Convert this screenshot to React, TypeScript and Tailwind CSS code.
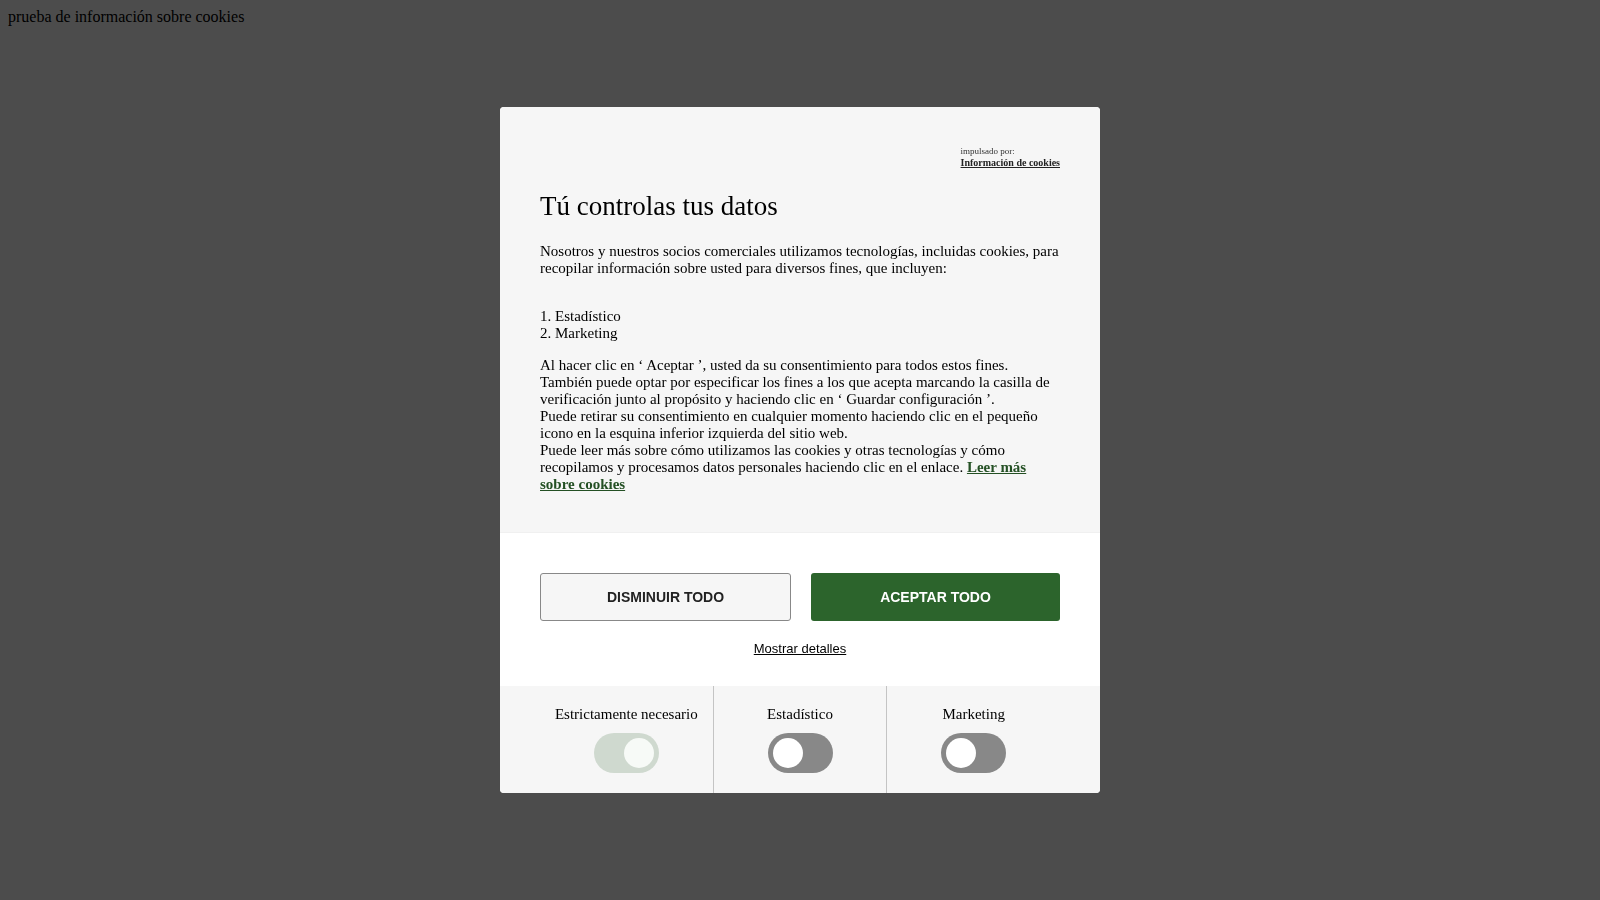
import { useState } from 'react';

interface Category {
  id: string;
  label: string;
  required?: boolean;
}

const categories: Category[] = [
  { id: 'necessary', label: 'Estrictamente necesario', required: true },
  { id: 'statistics', label: 'Estadístico' },
  { id: 'marketing', label: 'Marketing' },
];

interface ToggleProps {
  category: Category;
  checked: boolean;
  onChange: (checked: boolean) => void;
}

function CategoryToggle({ category, checked, onChange }: ToggleProps) {
  return (
    <div className="flex flex-1 flex-col items-center gap-[10px] border-r border-[#c4c4c4] py-5 last:border-r-0">
      <label htmlFor={category.id} className="whitespace-nowrap">
        {category.label}
      </label>
      <input
        id={category.id}
        type="checkbox"
        checked={checked}
        disabled={category.required}
        onChange={(event) => onChange(event.target.checked)}
        className="flex h-10 w-[65px] cursor-pointer appearance-none items-center rounded-full bg-[#888888] p-[5px] before:block before:size-[30px] before:rounded-full before:bg-white checked:justify-end checked:bg-[#2c642c] disabled:cursor-default disabled:bg-[#cfd9cf] disabled:before:bg-[#f7faf7]"
      />
    </div>
  );
}

export default function App() {
  const [accepted, setAccepted] = useState<Record<string, boolean>>({ necessary: true });

  const setAll = (value: boolean) =>
    setAccepted({ necessary: true, statistics: value, marketing: value });

  return (
    <div className="min-h-screen bg-white font-['Liberation_Serif',serif] text-black">
      <p className="p-2 text-base leading-[18px]">prueba de información sobre cookies</p>

      <div className="fixed inset-0 flex items-center justify-center overflow-auto bg-black/70">
        <section
          role="dialog"
          aria-modal="true"
          aria-labelledby="consent-title"
          className="w-full max-w-[600px] overflow-hidden rounded bg-white text-[15px] leading-[17px]"
        >
          <div className="border-b border-[#f0f0f0] bg-[#f6f6f6] px-10 py-[39px]">
            <div className="flex justify-end">
              <div className="text-[10px] leading-[11px] text-[#333333]">
                <p className="text-[9px]">impulsado por:</p>
                <a href="#proveedor" className="font-bold text-[#222222] underline">
                  Información de cookies
                </a>
              </div>
            </div>
            <h1 id="consent-title" className="mt-[22px] text-[27px] leading-8">
              Tú controlas tus datos
            </h1>
            <p className="mt-[21px]">
              Nosotros y nuestros socios comerciales utilizamos tecnologías, incluidas cookies, para
              recopilar información sobre usted para diversos fines, que incluyen:
            </p>
            <ol className="mt-[31px]">
              <li>1. Estadístico</li>
              <li>2. Marketing</li>
            </ol>
            <div className="mt-[15px]">
              <p>
                Al hacer clic en ‘ Aceptar ’, usted da su consentimiento para todos estos fines.
              </p>
              <p>
                También puede optar por especificar los fines a los que acepta marcando la casilla
                de verificación junto al propósito y haciendo clic en ‘ Guardar configuración ’.
              </p>
              <p>
                Puede retirar su consentimiento en cualquier momento haciendo clic en el pequeño
                icono en la esquina inferior izquierda del sitio web.
              </p>
              <p>
                Puede leer más sobre cómo utilizamos las cookies y otras tecnologías y cómo
                recopilamos y procesamos datos personales haciendo clic en el enlace.{' '}
                <a href="#cookies" className="font-bold text-[#245024] underline">
                  Leer más sobre cookies
                </a>
              </p>
            </div>
          </div>

          <div className="flex flex-col items-center px-10 pt-10 pb-[29px] font-['Liberation_Sans',Arial,sans-serif]">
            <div className="flex w-full gap-5 text-sm font-bold">
              <button
                type="button"
                onClick={() => setAll(false)}
                className="h-12 flex-1 cursor-pointer rounded-[3px] border border-[#888888] bg-[#f6f6f6] text-[#222222]"
              >
                DISMINUIR TODO
              </button>
              <button
                type="button"
                onClick={() => setAll(true)}
                className="h-12 flex-1 cursor-pointer rounded-[3px] bg-[#2c642c] text-white"
              >
                ACEPTAR TODO
              </button>
            </div>
            <button type="button" className="mt-5 cursor-pointer text-[13px] leading-4 underline">
              Mostrar detalles
            </button>
          </div>

          <div className="flex bg-[#f6f6f6] px-10">
            {categories.map((category) => (
              <CategoryToggle
                key={category.id}
                category={category}
                checked={Boolean(accepted[category.id])}
                onChange={(checked) => setAccepted({ ...accepted, [category.id]: checked })}
              />
            ))}
          </div>
        </section>
      </div>
    </div>
  );
}
